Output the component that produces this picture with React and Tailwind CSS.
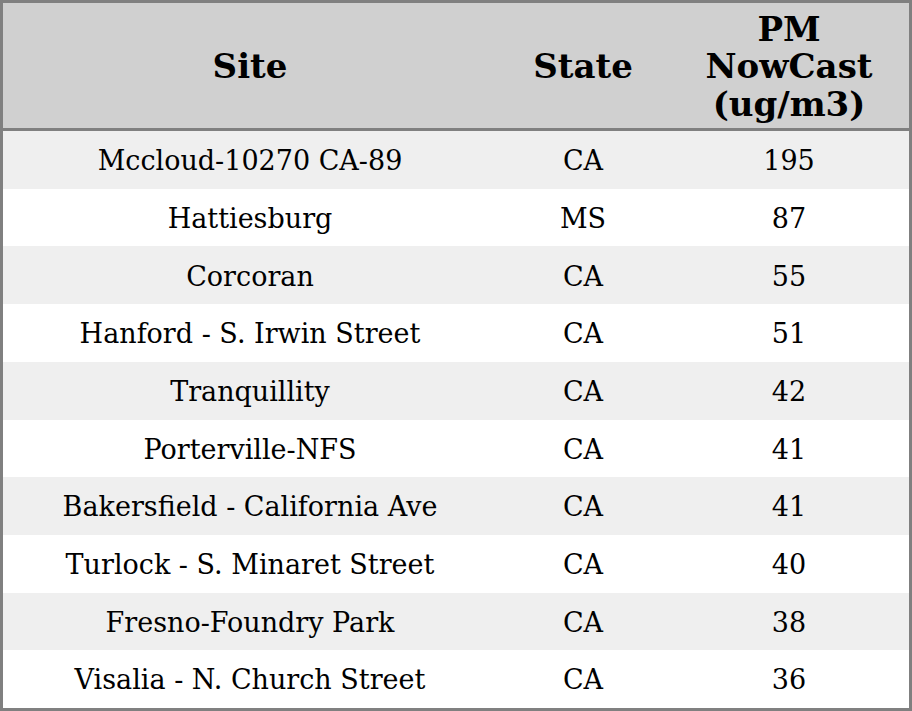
import React from "react";

const rows = [
  ["Mccloud-10270 CA-89", "CA", "195"],
  ["Hattiesburg", "MS", "87"],
  ["Corcoran", "CA", "55"],
  ["Hanford - S. Irwin Street", "CA", "51"],
  ["Tranquillity", "CA", "42"],
  ["Porterville-NFS", "CA", "41"],
  ["Bakersfield - California Ave", "CA", "41"],
  ["Turlock - S. Minaret Street", "CA", "40"],
  ["Fresno-Foundry Park", "CA", "38"],
  ["Visalia - N. Church Street", "CA", "36"],
];

export default function App() {
  return (
    <div
      className="w-[912px] h-[711px] bg-white border-[3px] border-[#808080] flex flex-col text-black"
      style={{ fontFamily: '"DejaVu Serif", serif' }}
    >
      <div className="grid grid-cols-[494px_172px_240px] h-[128px] shrink-0 pt-[3px] bg-[#d0d0d0] border-b-[3px] border-[#808080] items-center text-center font-bold text-[34px] leading-[37.5px]">
        <div>Site</div>
        <div>State</div>
        <div>
          PM<br />NowCast<br />(ug/m3)
        </div>
      </div>
      <div className="flex flex-col flex-1">
        {rows.map((r, i) => (
          <div
            key={i}
            className={
              "grid grid-cols-[494px_172px_240px] flex-1 pt-[3px] items-center text-center text-[27px] " +
              (i % 2 === 0 ? "bg-[#efefef]" : "bg-white")
            }
          >
            <div>{r[0]}</div>
            <div>{r[1]}</div>
            <div>{r[2]}</div>
          </div>
        ))}
      </div>
    </div>
  );
}
